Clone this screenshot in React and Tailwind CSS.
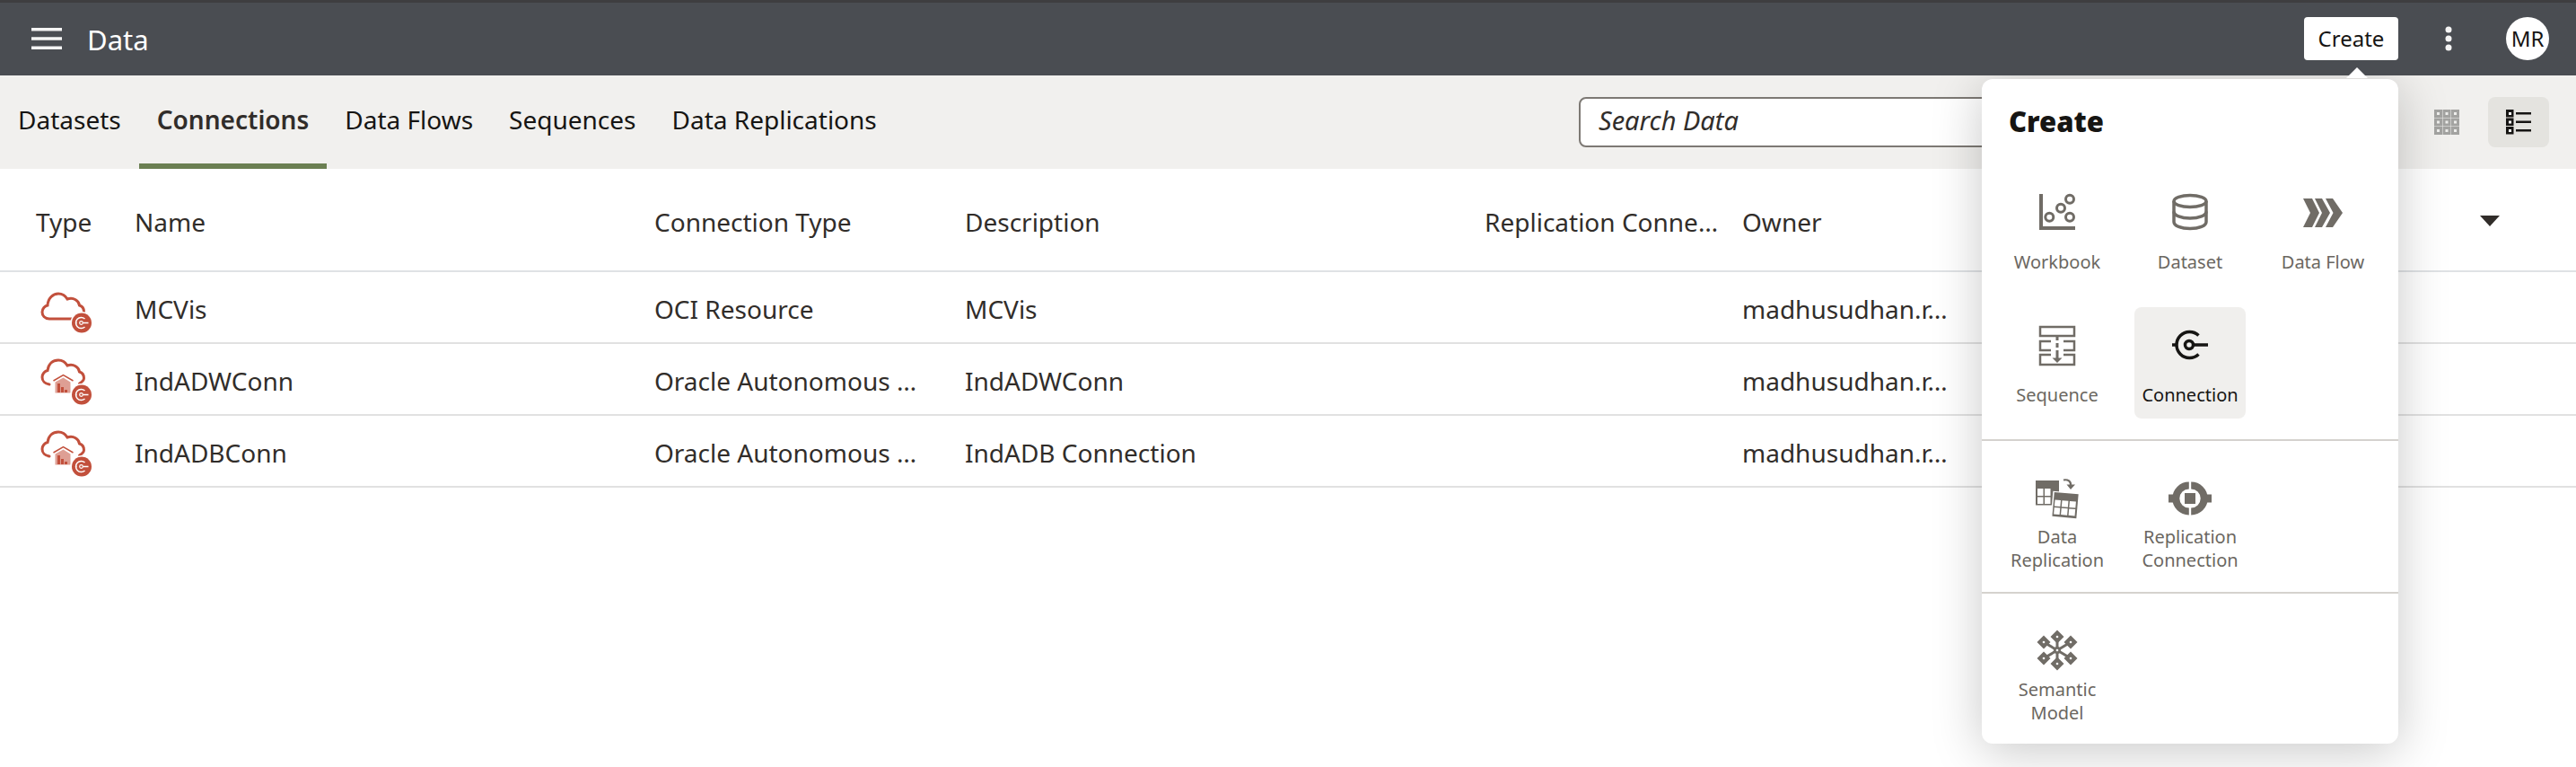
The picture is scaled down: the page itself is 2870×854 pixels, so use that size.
import React from "react";

const GRAY = "#706c66";
const RED = "#c2503c";

function CloudIcon({ warehouse }) {
  return (
    <svg width="60" height="60" viewBox="0 0 60 60" fill="none">
      {warehouse ? (
        <>
          <path d="M11 36C6 35.5 3 32 3 28C3 24 6 21 9 20.5C10 13 15 9 21 9C26 9 29 11.5 31 15C38 12.5 44 17 44.5 22C47.5 23 49.5 25.500 49.500 29C49.500 31 48 33 44.500 35" stroke={RED} strokeWidth="3" strokeLinecap="round" />
          <path d="M15.500 32L26.500 25.500L37.500 32" stroke={RED} strokeWidth="1.500" />
          <path d="M17.500 33.500L26.500 28.500L34.500 33.500V45.500H17.500Z" fill={RED} opacity="0.55" />
          <path d="M20 35h3v10h-3zM24 39h3v6h-3zM28 42h3v3h-3z" fill={RED} />
        </>
      ) : (
        <path d="M36 43H11C6 43 3 39.500 3 35.500C3 31.500 6 28.500 9 28C9.500 20 15 15 21 15C26 15 29 17.500 31 21C38 18.500 44 23 44.500 28C47.500 29 49.500 31.500 49.500 35" stroke={RED} strokeWidth="3" strokeLinecap="round" />
      )}
      <circle cx="47" cy="47.500" r="12.500" fill="#fff" />
      <circle cx="47" cy="47.500" r="11" fill={RED} />
      <path d="M50.500 43A6 6 0 1 0 50.500 52" stroke="#fff" strokeWidth="1.500" />
      <circle cx="46.500" cy="47.500" r="1.800" stroke="#fff" strokeWidth="1.200" />
      <path d="M40 47.500h1.500M48.500 47.500h6" stroke="#fff" strokeWidth="1.500" />
    </svg>
  );
}

function WorkbookIcon() {
  return (
    <svg width="48" height="48" viewBox="0 0 48 48" fill="none" stroke={GRAY}>
      <path d="M6 2V40H44" strokeWidth="4" />
      <circle cx="15.300" cy="27.700" r="4.500" strokeWidth="3" />
      <circle cx="28" cy="17.700" r="4.500" strokeWidth="3" />
      <circle cx="38" cy="7.700" r="4.500" strokeWidth="3" />
      <circle cx="38" cy="27.700" r="4.500" strokeWidth="3" />
    </svg>
  );
}

function DatasetIcon() {
  return (
    <svg width="48" height="48" viewBox="0 0 48 48" fill="none" stroke={GRAY} strokeWidth="3.500">
      <ellipse cx="24" cy="10" rx="18" ry="6.500" />
      <path d="M6 10V33C6 37.500 14 40.500 24 40.500S42 37.500 42 33V10" />
      <path d="M6 21.500C6 26 14 29 24 29S42 26 42 21.500" />
    </svg>
  );
}

function DataFlowIcon() {
  return (
    <svg width="48" height="48" viewBox="0 0 48 48" fill={GRAY}>
      <path d="M2 7H12L20 23L12 39H2L10 23Z" />
      <path d="M15 7H23L32 23L23 39H15L23 23Z" />
      <path d="M27 7H35L46 23L35 39H27L35.500 23Z" />
    </svg>
  );
}

function SequenceIcon() {
  return (
    <svg width="48" height="48" viewBox="0 0 48 48" fill="none" stroke={GRAY} strokeWidth="2.500">
      <rect x="5" y="2" width="38" height="10" />
      <path d="M17 18H5V28H17M31 18H43V28H31" />
      <path d="M17 33H5V44H43V33H31" />
      <path d="M24 13V17M24 20V25M24 28V37" strokeWidth="3" />
      <path d="M18.500 36.500H29.500L24 42Z" fill={GRAY} stroke="none" />
    </svg>
  );
}

function ConnectionIcon() {
  return (
    <svg width="48" height="48" viewBox="0 0 48 48" fill="none" stroke="#161513" strokeWidth="3.500">
      <path d="M33.500 11.500A14.500 14.500 0 1 0 33.500 32.500" />
      <circle cx="23" cy="22" r="4.500" />
      <path d="M4 22H10M27 22H44" />
    </svg>
  );
}

function DataReplicationIcon() {
  return (
    <svg width="48" height="48" viewBox="0 0 48 48" fill="none">
      <rect x="0" y="4" width="26" height="27.500" fill={GRAY} />
      <path d="M2 13h6.500v8H2zM10 13h6.500v8H10zM2 22.500h6.500v7.500H2zM10 22.500h6.500v7.500H10z" fill="#fff" />
      <g transform="rotate(5 33 32)">
        <rect x="18" y="17" width="29" height="29" fill="#fff" />
        <rect x="19.500" y="18" width="27" height="27" fill={GRAY} />
        <path d="M21 26.500h6.500v7H21zM29 26.500h7v7h-7zM37.500 26.500h7v7h-7zM21 35h6.500v7.500H21zM29 35h7v7.500h-7zM37.500 35h7v7.500h-7z" fill="#fff" />
      </g>
      <path d="M31 3.500C36 2.500 39.500 5 39 9.500" stroke={GRAY} strokeWidth="2.200" />
      <path d="M34.500 8.500H44L39 14Z" fill={GRAY} />
    </svg>
  );
}

function ReplicationConnectionIcon() {
  return (
    <svg width="48" height="48" viewBox="0 0 48 48" fill="none">
      <path d="M25.200 9.500A14.500 14.500 0 0 1 25.200 38.500M22.800 38.500A14.500 14.500 0 0 1 22.800 9.500" stroke={GRAY} strokeWidth="8" />
      <rect x="18" y="18" width="12" height="12" fill={GRAY} />
      <rect x="0" y="19.500" width="6" height="9" fill={GRAY} />
      <rect x="42" y="19.500" width="6" height="9" fill={GRAY} />
    </svg>
  );
}

function SemanticIcon() {
  const points = [
    [24, 8],
    [24, 38],
    [9, 14],
    [39, 14],
    [9, 32],
    [39, 32],
  ];
  return (
    <svg width="48" height="48" viewBox="0 0 48 48" fill="none">
      {points.map(([x, y]) => (
        <g key={`${x}-${y}`}>
          <path d={`M24 23L${x} ${y}`} stroke={GRAY} strokeWidth="3" />
          <path d={`M${x} ${y - 7.500}L${x + 7.500} ${y}L${x} ${y + 7.500}L${x - 7.500} ${y}Z`} fill={GRAY} />
          <circle cx={x} cy={y} r="1.300" fill="#fff" />
        </g>
      ))}
      <circle cx="24" cy="23" r="4" fill={GRAY} />
      <circle cx="24" cy="23" r="1.300" fill="#fff" />
    </svg>
  );
}

function GridIcon() {
  const cells = [0, 1, 2, 3, 4, 5, 6, 7, 8];
  return (
    <svg width="28" height="28" viewBox="0 0 28 28">
      {cells.map((i) => {
        const x = (i % 3) * 9.500;
        const y = Math.floor(i / 3) * 9.500;
        return (
          <g key={i}>
            <rect x={x} y={y} width="9" height="9" fill="#a3a3a1" />
            <rect x={x + 3} y={y + 3} width="3" height="3" fill="#eeeeec" />
          </g>
        );
      })}
    </svg>
  );
}

function ListIcon() {
  return (
    <svg width="28" height="28" viewBox="0 0 28 28">
      {[0, 9.500, 19].map((y) => (
        <g key={y}>
          <rect x="0" y={y} width="8.500" height="8.500" fill="#161513" />
          <rect x="3" y={y + 3} width="3" height="3" fill="#fff" />
          <rect x="11" y={y + 3} width="17" height="2.500" fill="#161513" />
        </g>
      ))}
    </svg>
  );
}

function CreateItem({ label, icon, active, wrapped }) {
  return (
    <div
      className={`h-[124px] rounded-lg flex flex-col items-center pt-5 text-[20px] leading-[26px] text-center ${
        active ? "bg-[#f0efed] text-[#161513]" : "text-[#6b6761]"
      }`}
    >
      <div className="h-12 w-12 shrink-0">{icon}</div>
      <div className={wrapped ? "mt-[6px]" : "mt-[17px]"}>{label}</div>
    </div>
  );
}

const tabs = ["Datasets", "Connections", "Data Flows", "Sequences", "Data Replications"];

const rows = [
  { name: "MCVis", type: "OCI Resource", description: "MCVis", warehouse: false },
  { name: "IndADWConn", type: "Oracle Autonomous …", description: "IndADWConn", warehouse: true },
  { name: "IndADBConn", type: "Oracle Autonomous …", description: "IndADB Connection", warehouse: true },
];

const columns = "grid grid-cols-[130px_579px_346px_579px_287px_262px_1fr] items-center";

function App() {
  return (
    <div className="relative h-screen overflow-hidden bg-white text-[28px] text-[#312d2a] font-['Noto_Sans',sans-serif]">
      <header className="relative z-20 h-[84px] bg-[#4a4d52] border-t-[3px] border-[#3e3e40] flex items-center pl-[35px] pr-[30px] text-white">
        <svg width="34" height="24" viewBox="0 0 34 24" fill="#f5f5f5" className="mt-[-1px]">
          <rect y="0" width="34" height="3.500" />
          <rect y="10.250" width="34" height="3.500" />
          <rect y="20.500" width="34" height="3.500" />
        </svg>
        <div className="ml-7 text-[31px] pt-[2px]">Data</div>
        <div className="ml-auto flex items-center mt-[-1px]">
          <div className="relative w-[105px] h-12 bg-white rounded text-[#161513] text-[24px] flex items-center justify-center">
            Create
            <div className="absolute top-[56px] left-[47px] w-0 h-0 border-x-[12px] border-x-transparent border-b-[12px] border-b-white" />
          </div>
          <div className="w-[112px] flex justify-center">
            <svg width="8" height="28" viewBox="0 0 8 28" fill="#f5f5f5">
              <circle cx="4" cy="4" r="3.500" />
              <circle cx="4" cy="14" r="3.500" />
              <circle cx="4" cy="24" r="3.500" />
            </svg>
          </div>
          <div className="ml-2 w-12 h-12 rounded-full bg-white text-[#161513] text-[24px] flex items-center justify-center">
            MR
          </div>
        </div>
      </header>

      <div className="h-[104px] bg-[#f1f0ee] flex items-stretch pr-[30px]">
        {tabs.map((tab) => (
          <div
            key={tab}
            className={`px-5 flex items-center border-b-[6px] ${
              tab === "Connections" ? "border-[#6b7f52] font-semibold" : "border-transparent text-[#161513]"
            }`}
          >
            {tab}
          </div>
        ))}
        <div className="ml-auto flex items-center gap-3">
          <div className="w-[880px] h-14 mr-[41px] bg-white border-2 border-[#7d7974] rounded-lg flex items-center pl-5 pb-1 italic text-[29px]">
            Search Data
          </div>
          <div className="w-[68px] h-14 flex items-center justify-center">
            <GridIcon />
          </div>
          <div className="w-[68px] h-14 rounded-lg bg-[#e4e3df] flex items-center justify-center">
            <ListIcon />
          </div>
        </div>
      </div>

      <div>
        <div className={`${columns} h-[115px] border-b-2 border-[#dfe2e5]`}>
          <div className="pl-10 pt-1">Type</div>
          <div className="pl-5 pt-1">Name</div>
          <div className="pl-5 pt-1">Connection Type</div>
          <div className="pl-5 pt-1">Description</div>
          <div className="pl-5 pt-1 whitespace-nowrap">Replication Conne…</div>
          <div className="pl-5 pt-1">Owner</div>
          <div className="flex justify-end pr-[85px] pt-[3px]">
            <div className="w-0 h-0 border-x-[11px] border-x-transparent border-t-[12px] border-t-[#312d2a]" />
          </div>
        </div>
        {rows.map((row) => (
          <div key={row.name} className={`${columns} h-20 border-b-2 border-[#e1e1e1]`}>
            <div className="pl-11">
              <CloudIcon warehouse={row.warehouse} />
            </div>
            <div className="pl-5 pt-[3px]">{row.name}</div>
            <div className="pl-5 pt-[3px] whitespace-nowrap">{row.type}</div>
            <div className="pl-5 pt-[3px]">{row.description}</div>
            <div />
            <div className="pl-5 pt-[3px] whitespace-nowrap">madhusudhan.r…</div>
            <div />
          </div>
        ))}
      </div>

      <div className="absolute z-10 top-[88px] left-[2208px] w-[464px] bg-white rounded-xl shadow-[0_8px_56px_rgba(0,0,0,0.22)]">
        <div className="px-[22px] pb-[23px] border-b-2 border-[#d5d2ce]">
          <div className="pl-2 pt-6 h-[106px] text-[31px] font-black text-[#161513]">Create</div>
          <div className="grid grid-cols-[repeat(3,124px)] gap-6">
            <CreateItem label="Workbook" icon={<WorkbookIcon />} />
            <CreateItem label="Dataset" icon={<DatasetIcon />} />
            <CreateItem label="Data Flow" icon={<DataFlowIcon />} />
            <CreateItem label="Sequence" icon={<SequenceIcon />} />
            <CreateItem label="Connection" icon={<ConnectionIcon />} active />
          </div>
        </div>
        <div className="px-[22px] pt-5 pb-6 border-b-2 border-[#d5d2ce]">
          <div className="grid grid-cols-[repeat(3,124px)] gap-6">
            <CreateItem label="Data Replication" icon={<DataReplicationIcon />} wrapped />
            <CreateItem label="Replication Connection" icon={<ReplicationConnectionIcon />} wrapped />
          </div>
        </div>
        <div className="px-[22px] pt-5 pb-[23px]">
          <div className="grid grid-cols-[repeat(3,124px)] gap-6">
            <CreateItem label="Semantic Model" icon={<SemanticIcon />} wrapped />
          </div>
        </div>
      </div>
    </div>
  );
}

export default App;
